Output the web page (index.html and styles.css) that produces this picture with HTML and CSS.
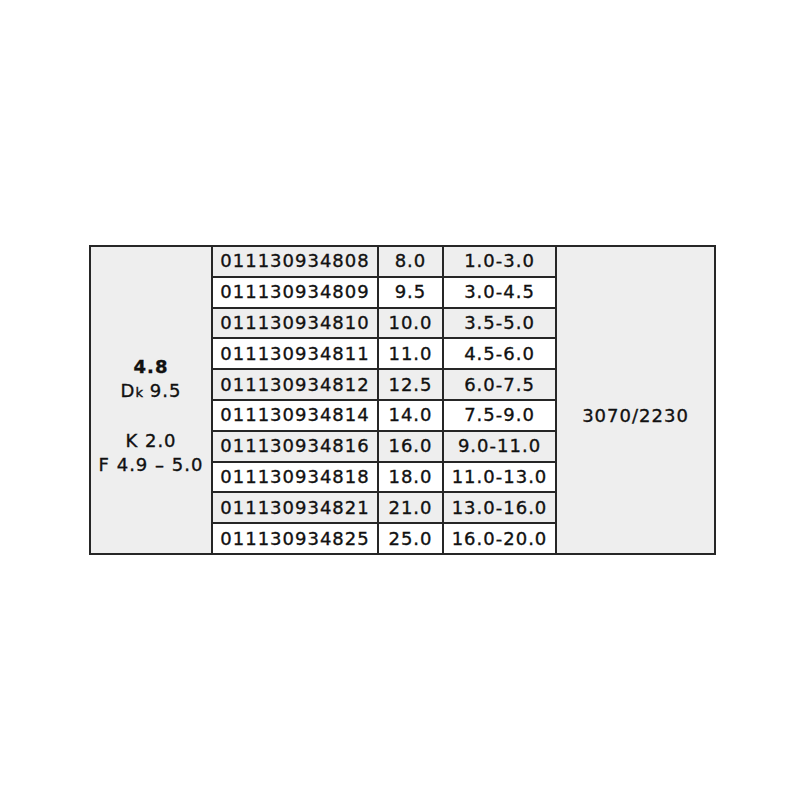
FILE: index.html
```html
<!DOCTYPE html>
<html>
<head>
<meta charset="utf-8">
<link rel="stylesheet" href="styles.css">
</head>
<body>
<div class="page">
<table class="spec">
  <colgroup>
    <col class="c1"><col class="c2"><col class="c3"><col class="c4"><col class="c5">
  </colgroup>
  <tbody>
    <tr class="alt">
      <td class="side" rowspan="10">
        <div class="side-text">
          <div class="b">4.8</div>
          <div>D<span class="sm">k</span> 9.5</div>
          <div>&nbsp;</div>
          <div>K 2.0</div>
          <div>F 4.9 – 5.0</div>
        </div>
      </td>
      <td>011130934808</td><td>8.0</td><td>1.0-3.0</td>
      <td class="side" rowspan="10"><div class="side-text">3070/2230</div></td>
    </tr>
    <tr><td>011130934809</td><td>9.5</td><td>3.0-4.5</td></tr>
    <tr class="alt"><td>011130934810</td><td>10.0</td><td>3.5-5.0</td></tr>
    <tr><td>011130934811</td><td>11.0</td><td>4.5-6.0</td></tr>
    <tr class="alt"><td>011130934812</td><td>12.5</td><td>6.0-7.5</td></tr>
    <tr><td>011130934814</td><td>14.0</td><td>7.5-9.0</td></tr>
    <tr class="alt"><td>011130934816</td><td>16.0</td><td>9.0-11.0</td></tr>
    <tr><td>011130934818</td><td>18.0</td><td>11.0-13.0</td></tr>
    <tr class="alt"><td>011130934821</td><td>21.0</td><td>13.0-16.0</td></tr>
    <tr><td>011130934825</td><td>25.0</td><td>16.0-20.0</td></tr>
  </tbody>
</table>
</div>
</body>
</html>
```

FILE: styles.css
```css
html, body {
  margin: 0;
  padding: 0;
  background: #ffffff;
}
.page {
  padding: 245px 0 0 89px;
}
.spec {
  border-collapse: collapse;
  table-layout: fixed;
  width: 625px;
  font-family: "DejaVu Sans", sans-serif;
  font-size: 18px;
  letter-spacing: 1px;
  color: #111;
  -webkit-text-stroke: 0.35px #111;
}
.c1 { width: 122px; }
.c2 { width: 166px; }
.c3 { width: 65px; }
.c4 { width: 113px; }
.c5 { width: 159px; }
.spec td {
  border: 2px solid #262626;
  height: 28.8px;
  padding: 0;
  text-align: center;
  vertical-align: middle;
  line-height: 20px;
  white-space: nowrap;
  background: #ffffff;
}
.spec tr.alt td,
.spec td.side {
  background: #eeeeee;
}
.side-text {
  padding-top: 33px;
  line-height: 24px;
}
.b {
  font-weight: bold;
}
.sm {
  font-size: 13px;
  letter-spacing: 0;
}
```
